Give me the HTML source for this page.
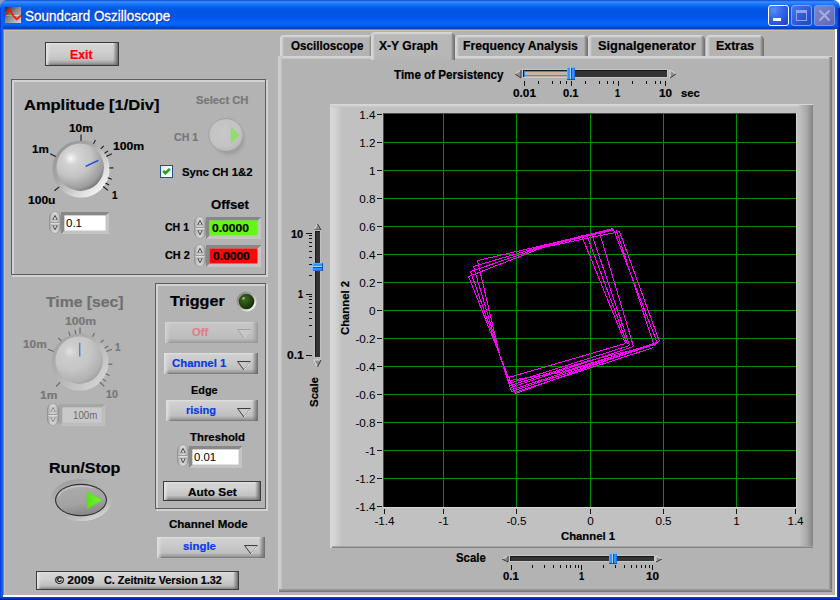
<!DOCTYPE html><html><head><meta charset="utf-8"><title>Soundcard Oszilloscope</title><style>
*{box-sizing:border-box;margin:0;padding:0}
html,body{width:840px;height:600px;overflow:hidden;background:#b3b3b3}
body{font-family:"Liberation Sans",sans-serif;position:relative;color:#000}
.a{position:absolute}
.t{position:absolute;white-space:nowrap;font-weight:bold;line-height:1;transform-origin:0 0;-webkit-text-stroke:0.2px currentColor}
.n{-webkit-text-stroke:0}
.n{font-weight:normal}
.g{color:#8a8a8a}
.bl{color:#0033cc}
</style></head><body>
<div class="a" style="left:0;top:0;width:420px;height:8px;background:#8a98c4"></div><div class="a" style="left:420px;top:0;width:420px;height:8px;background:#fff"></div>
<div class="a" id="titlebar" style="left:0;top:0;width:840px;height:29px;border-radius:7px 7px 0 0;background:linear-gradient(180deg,#0a3cc8 0,#2a78f0 1px,#3a8cff 2px,#2a84ff 3px,#1272fb 5px,#0560ee 7px,#0456e4 9px,#0353e2 13px,#0356e8 17px,#045cf2 20px,#0666fc 23px,#0560f6 25px,#0448d4 27px,#033cc0 29px)"></div>
<div class="a" style="left:0;top:8px;width:3px;height:592px;background:linear-gradient(90deg,#0030c8 0,#0c50e8 1px,#1264f4 2px,#0c58ea 3px)"></div>
<div class="a" style="left:837px;top:8px;width:3px;height:592px;background:linear-gradient(270deg,#001488 0,#0426b4 1px,#0a3cd4 2px,#0c44dc 3px)"></div>
<div class="a" style="left:0;top:597px;width:840px;height:3px;background:linear-gradient(0deg,#001488 0,#0426b4 1px,#0a3cd4 2px,#0c44dc 3px)"></div>
<div class="a" style="left:3px;top:29px;width:834px;height:1px;background:#8a846e"></div>
<div class="a" style="left:4px;top:30px;width:832px;height:1px;background:#c6bea6"></div>
<div class="a" style="left:3px;top:29px;width:1px;height:568px;background:#8a846e"></div>
<div class="a" style="left:4px;top:30px;width:1px;height:566px;background:#c6bea6"></div>
<div class="a" style="left:835px;top:29px;width:2px;height:568px;background:#fffff2"></div>
<div class="a" style="left:3px;top:595px;width:834px;height:2px;background:#fffff2"></div>
<svg class="a" style="left:5px;top:7px" width="16" height="16" viewBox="0 0 16 16"><defs><linearGradient id="icg" x1="0" y1="0" x2="1" y2="1"><stop offset="0" stop-color="#2a2422"/><stop offset=".45" stop-color="#8a8684"/><stop offset="1" stop-color="#d8d4d2"/></linearGradient></defs><rect width="16" height="16" fill="url(#icg)"/><path d="M0.5 8.5H8" stroke="#30f030" stroke-width="1"/><path d="M8 8.5H15" stroke="#a0f8a0" stroke-width="1"/><path d="M0.2 8.4L4.8 2.6L8.2 8.6L11.8 12.4L15.9 8.4" stroke="#ff1010" stroke-width="1.7" fill="none" stroke-linejoin="round"/></svg>
<div class="t n" style="left:25.3px;top:9px;font-size:14px;transform:scaleX(0.962);color:#fff;text-shadow:1px 1px 0 #0a2a9a;-webkit-text-stroke:0.3px #fff" id="title">Soundcard Oszilloscope</div>
<div class="a" style="left:768px;top:5px;width:21px;height:21px;border:1px solid #fff;border-radius:3px;background:radial-gradient(circle at 25% 20%,#5a8cf4 0,#3468ea 40%,#2450d8 75%,#1a3cb8 100%)"><div class="a" style="left:4px;top:12px;width:8px;height:3px;background:#fff"></div></div>
<div class="a" style="left:791px;top:5px;width:21px;height:21px;border:1px solid #86a2ea;border-radius:3px;background:linear-gradient(135deg,#4a78ec,#2c56d4 60%,#2248c4)"><div class="a" style="left:4px;top:4px;width:11px;height:11px;border:1px solid #8ea6e8;border-top-width:3px"></div></div>
<div class="a" style="left:814px;top:5px;width:21px;height:21px;border:1px solid #8494d2;border-radius:3px;background:linear-gradient(135deg,#7c88d0,#6a74c0 60%,#6068b4)"><svg class="a" style="left:3px;top:3px" width="13" height="13"><path d="M1.5 1.5L11.5 11.5M11.5 1.5L1.5 11.5" stroke="#a8aee0" stroke-width="2"/></svg></div>
<div class="a" style="left:45px;top:42px;width:74px;height:24px;background:#3a3a3a"></div>
<div class="a" style="left:46px;top:43px;width:72px;height:22px;background:linear-gradient(180deg,#e4e4e4 0,#d4d4d4 2px,#d0d0d0 40%,#c2c2c2 75%,#a0a0a0 calc(100% - 2px),#7c7c7c 100%)"></div>
<div class="a" style="left:46px;top:43px;width:4px;height:22px;background:linear-gradient(90deg,#e6e6e6,rgba(210,210,210,0))"></div>
<div class="a" style="left:113px;top:43px;width:5px;height:22px;background:linear-gradient(90deg,rgba(150,150,150,0),#6a6a6a)"></div>
<div class="t " id="exit" style="left:70.00px;top:49px;font-size:12.8px;transform:scaleX(0.9585);color:#ff0000;">Exit</div>
<div class="a" style="left:12px;top:80px;width:256px;height:197px;border:2px solid #d2d2d2"></div>
<div class="a" style="left:11px;top:79px;width:255px;height:196px;border:1px solid #5c5c5c"></div>
<div class="t " id="amp" style="left:23.75px;top:97px;font-size:15.3px;transform:scaleX(1.0770);">Amplitude [1/Div]</div>
<svg class="a" style="left:36px;top:124px" width="90" height="90" viewBox="-45 -45 90 90"><defs><linearGradient id="kr1" x1="0.15" y1="0.15" x2="0.85" y2="0.85"><stop offset="0" stop-color="#989898"/><stop offset=".35" stop-color="#a8a8a8"/><stop offset=".7" stop-color="#d2d2d2"/><stop offset="1" stop-color="#f2f2f2"/></linearGradient><radialGradient id="kb1" cx="0.36" cy="0.32" r="0.78" fx="0.33" fy="0.30"><stop offset="0" stop-color="#e0e0e0"/><stop offset=".2" stop-color="#d2d2d2"/><stop offset=".5" stop-color="#c4c4c4"/><stop offset=".82" stop-color="#9c9c9c"/><stop offset="1" stop-color="#5e5e5e"/></radialGradient><radialGradient id="ks1" cx=".5" cy=".5" r=".5"><stop offset="0" stop-color="#fff" stop-opacity="0.85"/><stop offset=".5" stop-color="#fff" stop-opacity="0.30"/><stop offset="1" stop-color="#fff" stop-opacity="0"/></radialGradient><radialGradient id="ko1" cx=".5" cy=".5" r=".5"><stop offset=".88" stop-color="#989898" stop-opacity="1"/><stop offset="1" stop-color="#b3b3b3" stop-opacity="0"/></radialGradient></defs><circle cx="0" cy="0" r="28.6" fill="url(#kr1)"/><circle cx="-0.8" cy="-1.8" r="23.7" fill="url(#kb1)"/><circle cx="-10.5" cy="-10.5" r="7" fill="url(#ks1)"/><path d="M-21.82 17.86L-26.62 21.79" stroke="#1a1a1a" stroke-width="1.1"/><path d="M-25.26 -12.54L-30.81 -15.30" stroke="#1a1a1a" stroke-width="1.1"/><path d="M0.00 -28.20L0.00 -34.40" stroke="#1a1a1a" stroke-width="1.1"/><path d="M25.28 -12.49L30.84 -15.24" stroke="#1a1a1a" stroke-width="1.1"/><path d="M22.10 17.52L26.96 21.37" stroke="#1a1a1a" stroke-width="1.1"/><path d="M12.54 -25.26L14.41 -29.02" stroke="#1a1a1a" stroke-width="1.1"/><path d="M19.80 -20.08L22.75 -23.07" stroke="#1a1a1a" stroke-width="1.1"/><path d="M23.46 -15.65L26.96 -17.98" stroke="#1a1a1a" stroke-width="1.1"/><path d="M28.18 -0.98L32.38 -1.13" stroke="#1a1a1a" stroke-width="1.1"/><path d="M26.77 8.85L30.76 10.17" stroke="#1a1a1a" stroke-width="1.1"/><path d="M24.47 14.01L28.12 16.10" stroke="#1a1a1a" stroke-width="1.1"/><path d="M4.66 -2.57L17.30 -8.59" stroke="#1848e0" stroke-width="1.5"/></svg>
<div class="t " id="k10m" style="left:68.75px;top:122px;font-size:11.6px;transform:scaleX(1.0232);">10m</div>
<div class="t " id="k1m" style="left:32.00px;top:143px;font-size:11.6px;transform:scaleX(0.9993);">1m</div>
<div class="t " id="k100m" style="left:112.50px;top:140px;font-size:11.6px;transform:scaleX(1.0532);">100m</div>
<div class="t " id="k100u" style="left:27.50px;top:194px;font-size:11.6px;transform:scaleX(1.0402);">100u</div>
<div class="t " id="k1" style="left:112.00px;top:189px;font-size:11.6px;transform:scaleX(0.8528);">1</div>
<svg class="a" style="left:48px;top:209.5px" width="14" height="25" viewBox="-1 -1 14 25"><defs><linearGradient id="sp49210.5" x1="0" x2="1" y1="0" y2="0"><stop offset="0" stop-color="#9c9c9c"/><stop offset=".3" stop-color="#cdcdcd"/><stop offset=".55" stop-color="#d6d6d6"/><stop offset=".8" stop-color="#bdbdbd"/><stop offset="1" stop-color="#8c8c8c"/></linearGradient></defs><rect x="0" y="0" width="12" height="23" rx="6" ry="7" fill="url(#sp49210.5)"/><rect x="0.5" y="0.5" width="11" height="22" rx="5.5" ry="6.5" fill="none" stroke="#8e8e8e" stroke-opacity=".7"/><path d="M1.5 11.5H10.5" stroke="#9a9a9a"/><path d="M1.5 12.5H10.5" stroke="#dcdcdc"/><path d="M3.8 8.8L6 4.4L8.2 8.8M3.8 14.4L6 18.8L8.2 14.4" stroke="#4a4a4a" stroke-width="1" fill="none"/><path d="M3.8 8.8H8.2M3.8 14.4H8.2" stroke="#4a4a4a" stroke-opacity=".45"/></svg>
<svg class="a" style="left:60.5px;top:211.5px" width="48.5" height="22"><rect width="48.5" height="22" fill="#c4c4c4"/><path d="M0 0H48.5L44.5 3.5H3.5V18.5L0 22Z" fill="#888888"/><rect x="3.5" y="3.5" width="41" height="15" fill="#fff"/></svg>
<div class="t " id="v01" style="left:65.70px;top:218px;font-size:10.9px;transform:scaleX(1.0560);font-weight:normal;-webkit-text-stroke:0;">0.1</div>
<div class="t " id="selch" style="left:196.30px;top:94px;font-size:11.6px;transform:scaleX(0.9696);color:#777777;">Select CH</div>
<div class="t " id="ch1g" style="left:174.20px;top:131px;font-size:11.6px;transform:scaleX(0.9120);color:#777777;">CH 1</div>
<svg class="a" style="left:200.2px;top:108.6px" width="52" height="52" viewBox="-26 -26 52 52"><defs><radialGradient id="tg1" cx=".45" cy=".42" r=".62"><stop offset="0" stop-color="#c7c7c7"/><stop offset=".7" stop-color="#c3c3c3"/><stop offset=".92" stop-color="#b8b8b8"/><stop offset="1" stop-color="#acacac"/></radialGradient><radialGradient id="tg2" cx=".5" cy=".5" r=".5"><stop offset="0" stop-color="#888" stop-opacity=".8"/><stop offset=".7" stop-color="#949494" stop-opacity=".6"/><stop offset="1" stop-color="#b3b3b3" stop-opacity="0"/></radialGradient></defs><circle cx="0" cy="0" r="20" fill="url(#tg2)" opacity=".35"/><circle cx="3" cy="4.5" r="19.5" fill="url(#tg2)"/><ellipse cx="0" cy="0" rx="17.4" ry="16.6" fill="url(#tg1)"/><ellipse cx="0" cy="0" rx="17.2" ry="16.4" fill="none" stroke="#989898" stroke-width=".9" stroke-opacity=".85"/><path d="M5.3 -7.6L13.2 0.3L5.3 8Z" fill="#92dc70" stroke="#92dc70" stroke-width="1" stroke-linejoin="round"/></svg>
<div class="a" style="left:160px;top:165px;width:13px;height:13px;background:linear-gradient(135deg,#e4e4e0,#fdfdfb 60%,#fff);border:1px solid #1c5088"></div>
<svg class="a" style="left:162px;top:167px" width="9" height="9"><path d="M1.2 3.8L3.5 6.2L7.8 1.8" stroke="#1fa01f" stroke-width="2.6" fill="none"/></svg>
<div class="t " id="sync" style="left:182.00px;top:166px;font-size:11.6px;transform:scaleX(0.9763);">Sync CH 1&amp;2</div>
<div class="t " id="offset" style="left:211.40px;top:198px;font-size:13.1px;transform:scaleX(1.0014);">Offset</div>
<div class="t " id="och1" style="left:165.30px;top:221px;font-size:11.6px;transform:scaleX(0.9082);">CH 1</div>
<svg class="a" style="left:193px;top:215px" width="14" height="25" viewBox="-1 -1 14 25"><defs><linearGradient id="sp194216" x1="0" x2="1" y1="0" y2="0"><stop offset="0" stop-color="#9c9c9c"/><stop offset=".3" stop-color="#cdcdcd"/><stop offset=".55" stop-color="#d6d6d6"/><stop offset=".8" stop-color="#bdbdbd"/><stop offset="1" stop-color="#8c8c8c"/></linearGradient></defs><rect x="0" y="0" width="12" height="23" rx="6" ry="7" fill="url(#sp194216)"/><rect x="0.5" y="0.5" width="11" height="22" rx="5.5" ry="6.5" fill="none" stroke="#8e8e8e" stroke-opacity=".7"/><path d="M1.5 11.5H10.5" stroke="#9a9a9a"/><path d="M1.5 12.5H10.5" stroke="#dcdcdc"/><path d="M3.8 8.8L6 4.4L8.2 8.8M3.8 14.4L6 18.8L8.2 14.4" stroke="#4a4a4a" stroke-width="1" fill="none"/><path d="M3.8 8.8H8.2M3.8 14.4H8.2" stroke="#4a4a4a" stroke-opacity=".45"/></svg>
<svg class="a" style="left:205.5px;top:216.5px" width="55.5" height="22"><rect width="55.5" height="22" fill="#c4c4c4"/><path d="M0 0H55.5L51.5 3.5H3.5V18.5L0 22Z" fill="#888888"/><rect x="3.5" y="3.5" width="48" height="15" fill="#62f813"/></svg>
<div class="t " id="g0" style="left:211.70px;top:223px;font-size:11.0px;transform:scaleX(1.0966);">0.0000</div>
<div class="t " id="och2" style="left:165.30px;top:249px;font-size:11.6px;transform:scaleX(0.9347);">CH 2</div>
<svg class="a" style="left:193px;top:243px" width="14" height="25" viewBox="-1 -1 14 25"><defs><linearGradient id="sp194244" x1="0" x2="1" y1="0" y2="0"><stop offset="0" stop-color="#9c9c9c"/><stop offset=".3" stop-color="#cdcdcd"/><stop offset=".55" stop-color="#d6d6d6"/><stop offset=".8" stop-color="#bdbdbd"/><stop offset="1" stop-color="#8c8c8c"/></linearGradient></defs><rect x="0" y="0" width="12" height="23" rx="6" ry="7" fill="url(#sp194244)"/><rect x="0.5" y="0.5" width="11" height="22" rx="5.5" ry="6.5" fill="none" stroke="#8e8e8e" stroke-opacity=".7"/><path d="M1.5 11.5H10.5" stroke="#9a9a9a"/><path d="M1.5 12.5H10.5" stroke="#dcdcdc"/><path d="M3.8 8.8L6 4.4L8.2 8.8M3.8 14.4L6 18.8L8.2 14.4" stroke="#4a4a4a" stroke-width="1" fill="none"/><path d="M3.8 8.8H8.2M3.8 14.4H8.2" stroke="#4a4a4a" stroke-opacity=".45"/></svg>
<svg class="a" style="left:205.5px;top:244.5px" width="55.5" height="22"><rect width="55.5" height="22" fill="#c4c4c4"/><path d="M0 0H55.5L51.5 3.5H3.5V18.5L0 22Z" fill="#888888"/><rect x="3.5" y="3.5" width="48" height="15" fill="#fb0707"/></svg>
<div class="t " id="r0" style="left:212.90px;top:251px;font-size:11.0px;transform:scaleX(1.0936);">0.0000</div>
<div class="t " id="time" style="left:45.75px;top:294px;font-size:15.3px;transform:scaleX(1.0279);color:#6f6f6f;">Time [sec]</div>
<svg class="a" style="left:35.400000000000006px;top:317px" width="90" height="90" viewBox="-45 -45 90 90"><defs><linearGradient id="kr2" x1="0.15" y1="0.15" x2="0.85" y2="0.85"><stop offset="0" stop-color="#a6a6a6"/><stop offset=".35" stop-color="#b0b0b0"/><stop offset=".7" stop-color="#c2c2c2"/><stop offset="1" stop-color="#d2d2d2"/></linearGradient><radialGradient id="kb2" cx="0.36" cy="0.32" r="0.78" fx="0.33" fy="0.30"><stop offset="0" stop-color="#d4d4d4"/><stop offset=".2" stop-color="#cccccc"/><stop offset=".5" stop-color="#c6c6c6"/><stop offset=".82" stop-color="#b2b2b2"/><stop offset="1" stop-color="#989898"/></radialGradient><radialGradient id="ks2" cx=".5" cy=".5" r=".5"><stop offset="0" stop-color="#fff" stop-opacity="0.35"/><stop offset=".5" stop-color="#fff" stop-opacity="0.12"/><stop offset="1" stop-color="#fff" stop-opacity="0"/></radialGradient><radialGradient id="ko2" cx=".5" cy=".5" r=".5"><stop offset=".88" stop-color="#a6a6a6" stop-opacity="1"/><stop offset="1" stop-color="#b3b3b3" stop-opacity="0"/></radialGradient></defs><circle cx="0" cy="0" r="28.6" fill="url(#kr2)"/><circle cx="-0.8" cy="-1.8" r="23.7" fill="url(#kb2)"/><circle cx="-10.5" cy="-10.5" r="7" fill="url(#ks2)"/><path d="M-19.70 20.18L-24.03 24.62" stroke="#686868" stroke-width="1.1"/><path d="M-26.18 -10.47L-31.94 -12.78" stroke="#686868" stroke-width="1.1"/><path d="M0.00 -28.20L0.00 -34.40" stroke="#686868" stroke-width="1.1"/><path d="M26.18 -10.47L31.94 -12.78" stroke="#686868" stroke-width="1.1"/><path d="M19.87 20.01L24.24 24.41" stroke="#686868" stroke-width="1.1"/><path d="M-18.80 -21.02L-21.60 -24.15" stroke="#686868" stroke-width="1.1"/><path d="M-9.83 -26.43L-11.29 -30.37" stroke="#686868" stroke-width="1.1"/><path d="M-4.31 -27.87L-4.96 -32.02" stroke="#686868" stroke-width="1.1"/><path d="M12.58 -25.24L14.46 -29.00" stroke="#686868" stroke-width="1.1"/><path d="M20.56 -19.30L23.62 -22.18" stroke="#686868" stroke-width="1.1"/><path d="M24.57 -13.84L28.23 -15.91" stroke="#686868" stroke-width="1.1"/><path d="M28.12 2.07L32.31 2.37" stroke="#686868" stroke-width="1.1"/><path d="M25.64 11.74L29.46 13.49" stroke="#686868" stroke-width="1.1"/><path d="M22.61 16.85L25.98 19.36" stroke="#686868" stroke-width="1.1"/><path d="M-0.30 -5.50L-0.30 -19.20" stroke="#5c7fd6" stroke-width="1.5"/></svg>
<div class="t " id="t100m" style="left:64.50px;top:315px;font-size:11.6px;transform:scaleX(1.0532);color:#777777;">100m</div>
<div class="t " id="t10m" style="left:23.00px;top:338px;font-size:11.6px;transform:scaleX(1.0232);color:#777777;">10m</div>
<div class="t " id="t1" style="left:114.50px;top:341px;font-size:11.6px;transform:scaleX(0.8528);color:#777777;">1</div>
<div class="t " id="t1m" style="left:39.50px;top:389px;font-size:11.6px;transform:scaleX(1.0291);color:#777777;">1m</div>
<div class="t " id="t10" style="left:106.25px;top:388px;font-size:11.6px;transform:scaleX(0.9303);color:#777777;">10</div>
<svg class="a" style="left:46px;top:402px" width="14" height="25" viewBox="-1 -1 14 25"><defs><linearGradient id="sp47403" x1="0" x2="1" y1="0" y2="0"><stop offset="0" stop-color="#9c9c9c"/><stop offset=".3" stop-color="#cdcdcd"/><stop offset=".55" stop-color="#d6d6d6"/><stop offset=".8" stop-color="#bdbdbd"/><stop offset="1" stop-color="#8c8c8c"/></linearGradient></defs><rect x="0" y="0" width="12" height="23" rx="6" ry="7" fill="url(#sp47403)"/><rect x="0.5" y="0.5" width="11" height="22" rx="5.5" ry="6.5" fill="none" stroke="#8e8e8e" stroke-opacity=".7"/><path d="M1.5 11.5H10.5" stroke="#9a9a9a"/><path d="M1.5 12.5H10.5" stroke="#dcdcdc"/><path d="M3.8 8.8L6 4.4L8.2 8.8M3.8 14.4L6 18.8L8.2 14.4" stroke="#8a8a8a" stroke-width="1" fill="none"/><path d="M3.8 8.8H8.2M3.8 14.4H8.2" stroke="#8a8a8a" stroke-opacity=".45"/></svg>
<svg class="a" style="left:58.5px;top:403.5px" width="46.5" height="22"><rect width="46.5" height="22" fill="#bebebe"/><path d="M0 0H46.5L42.5 3.5H3.5V18.5L0 22Z" fill="#a6a6a6"/><rect x="3.5" y="3.5" width="39" height="15" fill="#c9c9c9"/></svg>
<div class="t " id="v100m" style="left:73.10px;top:410px;font-size:10.9px;transform:scaleX(0.8877);font-weight:normal;-webkit-text-stroke:0;color:#6a6a6a;">100m</div>
<div class="t " id="run" style="left:48.60px;top:460px;font-size:15.3px;transform:scaleX(1.0503);">Run/Stop</div>
<svg class="a" style="left:43px;top:473px" width="76" height="54" viewBox="-38 -27 76 54"><defs><radialGradient id="rs0" cx=".5" cy=".5" r=".5"><stop offset=".72" stop-color="#8e8e8e" stop-opacity=".0"/><stop offset=".8" stop-color="#909090" stop-opacity=".55"/><stop offset="1" stop-color="#b3b3b3" stop-opacity="0"/></radialGradient><linearGradient id="rs1" x1="0.2" y1="0" x2="0.8" y2="1"><stop offset="0" stop-color="#8a8a8a" stop-opacity=".7"/><stop offset=".45" stop-color="#b3b3b3" stop-opacity="0"/><stop offset=".6" stop-color="#b3b3b3" stop-opacity="0"/><stop offset="1" stop-color="#ececec" stop-opacity=".95"/></linearGradient><linearGradient id="rs2" x1="0" y1="0" x2="0.3" y2="1"><stop offset="0" stop-color="#c4c4c4"/><stop offset=".25" stop-color="#a9a9a9"/><stop offset=".7" stop-color="#a2a2a2"/><stop offset="1" stop-color="#8c8c8c"/></linearGradient><linearGradient id="rs3" x1="0" x2="1"><stop offset="0" stop-color="#58e414"/><stop offset="1" stop-color="#7cf040"/></linearGradient></defs><ellipse cx="0" cy="0" rx="30.5" ry="21" fill="url(#rs1)"/><ellipse cx="0" cy="0" rx="26" ry="16.2" fill="#303030"/><ellipse cx="0" cy="0" rx="24.9" ry="15.1" fill="url(#rs2)"/><ellipse cx="0" cy="-0.3" rx="23.4" ry="13.6" fill="none" stroke="#d8d8d8" stroke-width="1.2" stroke-opacity=".55" stroke-dasharray="38 200" stroke-dashoffset="-62"/><path d="M6.2 -8.3L21.3 0.2L6.2 8.6Z" fill="url(#rs3)" stroke="#5ae01a" stroke-width=".8" stroke-linejoin="round"/></svg>
<div class="a" style="left:156px;top:284px;width:112px;height:227px;border:2px solid #d2d2d2"></div>
<div class="a" style="left:155px;top:283px;width:111px;height:226px;border:1px solid #5c5c5c"></div>
<div class="t " id="trig" style="left:170.00px;top:293px;font-size:15.3px;transform:scaleX(1.0546);">Trigger</div>
<svg class="a" style="left:234px;top:289px" width="25" height="25" viewBox="-12.5 -12.5 25 25"><defs><linearGradient id="ld1" x1=".15" y1=".15" x2=".85" y2=".85"><stop offset="0" stop-color="#8a8a8a"/><stop offset=".5" stop-color="#b0b0b0"/><stop offset="1" stop-color="#f4f4f4"/></linearGradient><radialGradient id="ld2" cx=".38" cy=".35" r=".7"><stop offset="0" stop-color="#3e6a2a"/><stop offset=".45" stop-color="#2a5014"/><stop offset="1" stop-color="#122806"/></radialGradient></defs><circle r="10" fill="url(#ld1)"/><circle r="7.8" fill="url(#ld2)"/><ellipse cx="-3" cy="-3.2" rx="1.6" ry="1.1" transform="rotate(-35 -3 -3.2)" fill="#c8dcb8" fill-opacity=".7"/></svg>
<div class="a" style="left:165px;top:322px;width:93px;height:21px;background:linear-gradient(180deg,#d2d2d2 0,#c6c6c6 2px,#c2c2c2 45%,#bcbcbc 78%,#aaaaaa calc(100% - 2px),#989898 100%)"></div>
<div class="a" style="left:165px;top:322px;width:5px;height:21px;background:linear-gradient(90deg,#d4d4d4,rgba(214,214,214,0))"></div>
<div class="a" style="left:252px;top:322px;width:6px;height:21px;background:linear-gradient(90deg,rgba(150,150,150,0),#9a9a9a)"></div>
<svg class="a" style="left:237px;top:329px" width="14" height="10"><path d="M0.5 0.5H13.5L7 9Z" fill="#c8c8c8" stroke="#a2a2a2" stroke-width="1"/><path d="M13.5 0.8L7.3 9" stroke="#d8d8d8" stroke-width="1" fill="none"/></svg>
<div class="t " id="off" style="left:192.00px;top:326px;font-size:11.6px;transform:scaleX(0.9718);color:#e47c8c;">Off</div>
<div class="a" style="left:164px;top:353px;width:94px;height:21px;background:linear-gradient(180deg,#e2e2e2 0,#d0d0d0 2px,#cacaca 40%,#bfbfbf 75%,#a0a0a0 calc(100% - 2px),#767676 100%)"></div>
<div class="a" style="left:164px;top:353px;width:5px;height:21px;background:linear-gradient(90deg,#e0e0e0,rgba(214,214,214,0))"></div>
<div class="a" style="left:252px;top:353px;width:6px;height:21px;background:linear-gradient(90deg,rgba(150,150,150,0),#6c6c6c)"></div>
<svg class="a" style="left:237px;top:361px" width="14" height="10"><path d="M0.5 0.5H13.5L7 9Z" fill="#c8c8c8" stroke="#3c3c3c" stroke-width="1"/><path d="M13.5 0.8L7.3 9" stroke="#ececec" stroke-width="1" fill="none"/></svg>
<div class="t " id="chan1" style="left:172.00px;top:357px;font-size:11.6px;transform:scaleX(0.9795);color:#0c38e8;">Channel 1</div>
<div class="t " id="edge" style="left:191.20px;top:384px;font-size:11.6px;transform:scaleX(0.9379);">Edge</div>
<div class="a" style="left:166px;top:400px;width:92px;height:21px;background:linear-gradient(180deg,#e2e2e2 0,#d0d0d0 2px,#cacaca 40%,#bfbfbf 75%,#a0a0a0 calc(100% - 2px),#767676 100%)"></div>
<div class="a" style="left:166px;top:400px;width:5px;height:21px;background:linear-gradient(90deg,#e0e0e0,rgba(214,214,214,0))"></div>
<div class="a" style="left:252px;top:400px;width:6px;height:21px;background:linear-gradient(90deg,rgba(150,150,150,0),#6c6c6c)"></div>
<svg class="a" style="left:237px;top:408px" width="14" height="10"><path d="M0.5 0.5H13.5L7 9Z" fill="#c8c8c8" stroke="#3c3c3c" stroke-width="1"/><path d="M13.5 0.8L7.3 9" stroke="#ececec" stroke-width="1" fill="none"/></svg>
<div class="t " id="rising" style="left:185.80px;top:404px;font-size:11.6px;transform:scaleX(0.9498);color:#0c38e8;">rising</div>
<div class="t " id="thr" style="left:189.70px;top:431px;font-size:11.6px;transform:scaleX(0.9808);">Threshold</div>
<svg class="a" style="left:176px;top:443px" width="14" height="25" viewBox="-1 -1 14 25"><defs><linearGradient id="sp177444" x1="0" x2="1" y1="0" y2="0"><stop offset="0" stop-color="#9c9c9c"/><stop offset=".3" stop-color="#cdcdcd"/><stop offset=".55" stop-color="#d6d6d6"/><stop offset=".8" stop-color="#bdbdbd"/><stop offset="1" stop-color="#8c8c8c"/></linearGradient></defs><rect x="0" y="0" width="12" height="23" rx="6" ry="7" fill="url(#sp177444)"/><rect x="0.5" y="0.5" width="11" height="22" rx="5.5" ry="6.5" fill="none" stroke="#8e8e8e" stroke-opacity=".7"/><path d="M1.5 11.5H10.5" stroke="#9a9a9a"/><path d="M1.5 12.5H10.5" stroke="#dcdcdc"/><path d="M3.8 8.8L6 4.4L8.2 8.8M3.8 14.4L6 18.8L8.2 14.4" stroke="#4a4a4a" stroke-width="1" fill="none"/><path d="M3.8 8.8H8.2M3.8 14.4H8.2" stroke="#4a4a4a" stroke-opacity=".45"/></svg>
<svg class="a" style="left:188.5px;top:445.5px" width="53.5" height="22"><rect width="53.5" height="22" fill="#c4c4c4"/><path d="M0 0H53.5L49.5 3.5H3.5V18.5L0 22Z" fill="#888888"/><rect x="3.5" y="3.5" width="46" height="15" fill="#fff"/></svg>
<div class="t " id="v001" style="left:193.70px;top:452px;font-size:10.9px;transform:scaleX(1.0419);font-weight:normal;-webkit-text-stroke:0;">0.01</div>
<div class="a" style="left:163px;top:481px;width:98px;height:20px;background:#3a3a3a"></div>
<div class="a" style="left:164px;top:482px;width:96px;height:18px;background:linear-gradient(180deg,#e4e4e4 0,#d4d4d4 2px,#d0d0d0 40%,#c2c2c2 75%,#a0a0a0 calc(100% - 2px),#7c7c7c 100%)"></div>
<div class="a" style="left:164px;top:482px;width:4px;height:18px;background:linear-gradient(90deg,#e6e6e6,rgba(210,210,210,0))"></div>
<div class="a" style="left:255px;top:482px;width:5px;height:18px;background:linear-gradient(90deg,rgba(150,150,150,0),#6a6a6a)"></div>
<div class="t " id="autoset" style="left:187.50px;top:486px;font-size:11.6px;transform:scaleX(1.0212);">Auto Set</div>
<div class="t " id="chmode" style="left:169.20px;top:518px;font-size:11.6px;transform:scaleX(0.9940);">Channel Mode</div>
<div class="a" style="left:157px;top:537px;width:108px;height:21px;background:linear-gradient(180deg,#e2e2e2 0,#d0d0d0 2px,#cacaca 40%,#bfbfbf 75%,#a0a0a0 calc(100% - 2px),#767676 100%)"></div>
<div class="a" style="left:157px;top:537px;width:5px;height:21px;background:linear-gradient(90deg,#e0e0e0,rgba(214,214,214,0))"></div>
<div class="a" style="left:259px;top:537px;width:6px;height:21px;background:linear-gradient(90deg,rgba(150,150,150,0),#6c6c6c)"></div>
<svg class="a" style="left:244px;top:545px" width="14" height="10"><path d="M0.5 0.5H13.5L7 9Z" fill="#c8c8c8" stroke="#3c3c3c" stroke-width="1"/><path d="M13.5 0.8L7.3 9" stroke="#ececec" stroke-width="1" fill="none"/></svg>
<div class="t " id="single" style="left:183.30px;top:540px;font-size:11.6px;transform:scaleX(0.9814);color:#0c38e8;">single</div>
<div class="a" style="left:36px;top:571px;width:203px;height:19px;background:#3c3c3c"></div>
<div class="a" style="left:37px;top:572px;width:201px;height:17px;background:linear-gradient(180deg,#e2e2e2 0,#d4d4d4 2px,#cfcfcf 45%,#bebebe 80%,#9a9a9a calc(100% - 1px),#808080 100%)"></div>
<div class="a" style="left:37px;top:572px;width:4px;height:17px;background:linear-gradient(90deg,#e8e8e8,rgba(210,210,210,0))"></div>
<div class="a" style="left:233px;top:572px;width:5px;height:17px;background:linear-gradient(90deg,rgba(150,150,150,0),#6c6c6c)"></div>
<div class="t " id="ver" style="left:55.10px;top:575px;font-size:10.9px;transform:scaleX(1.1103);">© 2009</div>
<div class="t " id="ver2" style="left:104.30px;top:575px;font-size:10.9px;transform:scaleX(0.9931);">C. Zeitnitz Version 1.32</div>
<div class="a" style="left:278px;top:56px;width:554px;height:536px;background:#b3b3b3"></div>
<div class="a" style="left:278px;top:56px;width:554px;height:3px;background:linear-gradient(180deg,#d6d6d6,#cdcdcd 66%,#c0c0c0)"></div>
<div class="a" style="left:278px;top:56px;width:4px;height:536px;background:linear-gradient(90deg,#d0d0d0,#cbcbcb 60%,#bebebe)"></div>
<div class="a" style="left:829px;top:57px;width:3px;height:535px;background:linear-gradient(90deg,#a2a2a2,#8a8a8a 50%,#707070)"></div>
<div class="a" style="left:279px;top:589px;width:553px;height:3px;background:linear-gradient(180deg,#a2a2a2,#8a8a8a 50%,#707070)"></div>
<div class="a" style="left:280px;top:35px;width:93px;height:21px;background:#b3b3b3;border-radius:4px 5px 0 0;overflow:hidden"><div class="a" style="left:0;top:0;width:100%;height:3px;background:linear-gradient(180deg,#dcdcdc,#cecece 60%,rgba(190,190,190,0))"></div><div class="a" style="left:0;top:0;width:4px;height:100%;background:linear-gradient(90deg,#dadada,#d0d0d0 50%,rgba(190,190,190,0))"></div><div class="a" style="right:0;top:1px;width:4px;height:100%;background:linear-gradient(90deg,rgba(160,160,160,0),#8e8e8e 40%,#6c6c6c)"></div></div>
<div class="a" style="left:455px;top:35px;width:133px;height:21px;background:#b3b3b3;border-radius:4px 5px 0 0;overflow:hidden"><div class="a" style="left:0;top:0;width:100%;height:3px;background:linear-gradient(180deg,#dcdcdc,#cecece 60%,rgba(190,190,190,0))"></div><div class="a" style="left:0;top:0;width:4px;height:100%;background:linear-gradient(90deg,#dadada,#d0d0d0 50%,rgba(190,190,190,0))"></div><div class="a" style="right:0;top:1px;width:4px;height:100%;background:linear-gradient(90deg,rgba(160,160,160,0),#8e8e8e 40%,#6c6c6c)"></div></div>
<div class="a" style="left:588px;top:35px;width:117px;height:21px;background:#b3b3b3;border-radius:4px 5px 0 0;overflow:hidden"><div class="a" style="left:0;top:0;width:100%;height:3px;background:linear-gradient(180deg,#dcdcdc,#cecece 60%,rgba(190,190,190,0))"></div><div class="a" style="left:0;top:0;width:4px;height:100%;background:linear-gradient(90deg,#dadada,#d0d0d0 50%,rgba(190,190,190,0))"></div><div class="a" style="right:0;top:1px;width:4px;height:100%;background:linear-gradient(90deg,rgba(160,160,160,0),#8e8e8e 40%,#6c6c6c)"></div></div>
<div class="a" style="left:706px;top:35px;width:58px;height:21px;background:#b3b3b3;border-radius:4px 5px 0 0;overflow:hidden"><div class="a" style="left:0;top:0;width:100%;height:3px;background:linear-gradient(180deg,#dcdcdc,#cecece 60%,rgba(190,190,190,0))"></div><div class="a" style="left:0;top:0;width:4px;height:100%;background:linear-gradient(90deg,#dadada,#d0d0d0 50%,rgba(190,190,190,0))"></div><div class="a" style="right:0;top:1px;width:4px;height:100%;background:linear-gradient(90deg,rgba(160,160,160,0),#8e8e8e 40%,#6c6c6c)"></div></div>
<div class="a" style="left:371px;top:32px;width:84px;height:28px;background:#b7b7b7;border-radius:4px 5px 0 0;overflow:hidden"><div class="a" style="left:0;top:0;width:100%;height:3px;background:linear-gradient(180deg,#dcdcdc,#cecece 60%,rgba(190,190,190,0))"></div><div class="a" style="left:0;top:0;width:4px;height:100%;background:linear-gradient(90deg,#dadada,#d0d0d0 50%,rgba(190,190,190,0))"></div><div class="a" style="right:0;top:1px;width:4px;height:100%;background:linear-gradient(90deg,rgba(160,160,160,0),#8e8e8e 40%,#6c6c6c)"></div></div>
<div class="a" style="left:375px;top:55px;width:76px;height:6px;background:linear-gradient(180deg,#b7b7b7,#b3b3b3)"></div>
<div class="t " id="tb1" style="left:290.50px;top:40px;font-size:12.7px;transform:scaleX(0.9171);">Oscilloscope</div>
<div class="t " id="tb2" style="left:379.25px;top:40px;font-size:12.7px;transform:scaleX(0.9535);">X-Y Graph</div>
<div class="t " id="tb3" style="left:463.00px;top:40px;font-size:12.7px;transform:scaleX(0.9622);">Frequency Analysis</div>
<div class="t " id="tb4" style="left:598.00px;top:40px;font-size:12.7px;transform:scaleX(1.0110);">Signalgenerator</div>
<div class="t " id="tb5" style="left:716.25px;top:40px;font-size:12.7px;transform:scaleX(0.9785);">Extras</div>
<div class="t " id="top" style="left:393.75px;top:69px;font-size:12.0px;transform:scaleX(0.9677);">Time of Persistency</div>
<svg class="a" style="left:514px;top:69px" width="8" height="10" viewBox="-1 -1 8 10"><path d="M6 0L0 4.0L6 8Z" fill="#909090"/><path d="M6 0L0 4.0" stroke="#dcdcdc" stroke-width="1" fill="none"/><path d="M0 4.0L6 8L6 0" stroke="#3a3a3a" stroke-width="1" fill="none"/></svg>
<svg class="a" style="left:669px;top:69px" width="8" height="10" viewBox="-1 -1 8 10"><path d="M0 0L6 4.0L0 8Z" fill="#909090"/><path d="M0 8L0 0L6 4.0" stroke="#dcdcdc" stroke-width="1" fill="none"/><path d="M6 4.0L0 8" stroke="#3a3a3a" stroke-width="1" fill="none"/></svg>
<div class="a" style="left:522px;top:69px;width:146px;height:9px;background:#c6c6c6"></div>
<div class="a" style="left:523px;top:70px;width:144px;height:7px;background:#343434;border-top:1px solid #161616;border-left:1px solid #161616"></div>
<div class="a" style="left:524px;top:71px;width:44px;height:6px;background:#c6b6a6;border:1px solid #2e90ff;border-bottom:none;box-shadow:inset 0 -1px 0 #c0b0a0,inset 0 -2px 0 #2e90ff"></div>
<div class="a" style="left:567px;top:67px;width:8px;height:13px;background:linear-gradient(90deg,#5aaaff 0,#5aaaff 12.5%,#3292ff 12.5%,#3292ff 37.5%,#a4d2ff 37.5%,#a4d2ff 50%,#1050b4 50%,#1050b4 62.5%,#3292ff 62.5%,#3292ff 87.5%,#2272d8 87.5%,#2272d8 100%);box-shadow:inset 0 1px 0 rgba(150,200,255,.7),inset 0 -1px 0 rgba(10,60,150,.7)"></div>
<svg class="a" style="left:0;top:81px" width="840" height="8" shape-rendering="crispEdges"><rect x="524" y="0" width="1" height="5" fill="#101010"/><rect x="538" y="0" width="1" height="3" fill="#101010"/><rect x="552" y="0" width="1" height="3" fill="#101010"/><rect x="560" y="0" width="1" height="3" fill="#101010"/><rect x="566" y="0" width="1" height="3" fill="#101010"/><rect x="571" y="0" width="1" height="5" fill="#101010"/><rect x="585" y="0" width="1" height="3" fill="#101010"/><rect x="599" y="0" width="1" height="3" fill="#101010"/><rect x="607" y="0" width="1" height="3" fill="#101010"/><rect x="613" y="0" width="1" height="3" fill="#101010"/><rect x="618" y="0" width="1" height="5" fill="#101010"/><rect x="632" y="0" width="1" height="3" fill="#101010"/><rect x="646" y="0" width="1" height="3" fill="#101010"/><rect x="655" y="0" width="1" height="3" fill="#101010"/><rect x="660" y="0" width="1" height="3" fill="#101010"/><rect x="665" y="0" width="1" height="5" fill="#101010"/></svg>
<div class="t " id="s001" style="left:512.50px;top:87px;font-size:11.6px;transform:scaleX(1.0189);">0.01</div>
<div class="t " id="s01" style="left:562.50px;top:87px;font-size:11.6px;transform:scaleX(0.9613);">0.1</div>
<div class="t " id="s1" style="left:615.00px;top:87px;font-size:11.6px;transform:scaleX(0.7752);">1</div>
<div class="t " id="s10" style="left:658.75px;top:87px;font-size:11.6px;transform:scaleX(1.0078);">10</div>
<div class="t " id="ssec" style="left:680.50px;top:87px;font-size:11.6px;transform:scaleX(0.9691);">sec</div>
<div class="t " id="scl" style="left:456.10px;top:552px;font-size:12.0px;transform:scaleX(0.9472);">Scale</div>
<svg class="a" style="left:501px;top:555px" width="8" height="8" viewBox="-1 -1 8 8"><path d="M6 0L0 3.0L6 6Z" fill="#909090"/><path d="M6 0L0 3.0" stroke="#dcdcdc" stroke-width="1" fill="none"/><path d="M0 3.0L6 6L6 0" stroke="#3a3a3a" stroke-width="1" fill="none"/></svg>
<svg class="a" style="left:655px;top:555px" width="8" height="8" viewBox="-1 -1 8 8"><path d="M0 0L6 3.0L0 6Z" fill="#909090"/><path d="M0 6L0 0L6 3.0" stroke="#dcdcdc" stroke-width="1" fill="none"/><path d="M6 3.0L0 6" stroke="#3a3a3a" stroke-width="1" fill="none"/></svg>
<div class="a" style="left:509px;top:555px;width:146px;height:7px;background:#c6c6c6"></div>
<div class="a" style="left:510px;top:556px;width:144px;height:5px;background:#343434;border-top:1px solid #161616;border-left:1px solid #161616"></div>
<div class="a" style="left:609px;top:553px;width:8px;height:11px;background:linear-gradient(90deg,#5aaaff 0,#5aaaff 12.5%,#3292ff 12.5%,#3292ff 37.5%,#a4d2ff 37.5%,#a4d2ff 50%,#1050b4 50%,#1050b4 62.5%,#3292ff 62.5%,#3292ff 87.5%,#2272d8 87.5%,#2272d8 100%);box-shadow:inset 0 1px 0 rgba(150,200,255,.7),inset 0 -1px 0 rgba(10,60,150,.7)"></div>
<svg class="a" style="left:0;top:565px" width="840" height="8" shape-rendering="crispEdges"><rect x="511" y="0" width="1" height="5" fill="#101010"/><rect x="532" y="0" width="1" height="3" fill="#101010"/><rect x="544" y="0" width="1" height="3" fill="#101010"/><rect x="553" y="0" width="1" height="3" fill="#101010"/><rect x="560" y="0" width="1" height="3" fill="#101010"/><rect x="566" y="0" width="1" height="3" fill="#101010"/><rect x="570" y="0" width="1" height="3" fill="#101010"/><rect x="575" y="0" width="1" height="3" fill="#101010"/><rect x="578" y="0" width="1" height="3" fill="#101010"/><rect x="581" y="0" width="1" height="5" fill="#101010"/><rect x="603" y="0" width="1" height="3" fill="#101010"/><rect x="615" y="0" width="1" height="3" fill="#101010"/><rect x="624" y="0" width="1" height="3" fill="#101010"/><rect x="631" y="0" width="1" height="3" fill="#101010"/><rect x="636" y="0" width="1" height="3" fill="#101010"/><rect x="641" y="0" width="1" height="3" fill="#101010"/><rect x="645" y="0" width="1" height="3" fill="#101010"/><rect x="649" y="0" width="1" height="3" fill="#101010"/><rect x="652" y="0" width="1" height="5" fill="#101010"/></svg>
<div class="t " id="b01" style="left:502.60px;top:570px;font-size:11.6px;transform:scaleX(0.9799);">0.1</div>
<div class="t " id="b1" style="left:579.00px;top:570px;font-size:11.6px;transform:scaleX(0.8063);">1</div>
<div class="t " id="b10" style="left:645.70px;top:570px;font-size:11.6px;transform:scaleX(1.0156);">10</div>
<svg class="a" style="left:313px;top:223px" width="9" height="8" viewBox="-1 -1 9 8"><path d="M0 6L3.5 0L7 6Z" fill="#909090"/><path d="M0 6L3.5 0" stroke="#dcdcdc" stroke-width="1" fill="none"/><path d="M3.5 0L7 6L0 6" stroke="#3a3a3a" stroke-width="1" fill="none"/></svg>
<svg class="a" style="left:313px;top:359px" width="9" height="9" viewBox="-1 -1 9 9"><path d="M0 0L3.5 7L7 0Z" fill="#909090"/><path d="M7 0L0 0L3.5 7" stroke="#dcdcdc" stroke-width="1" fill="none"/><path d="M3.5 7L7 0" stroke="#3a3a3a" stroke-width="1" fill="none"/></svg>
<div class="a" style="left:314px;top:230px;width:7px;height:128px;background:#bebebe"></div>
<div class="a" style="left:315px;top:231px;width:5px;height:126px;background:#343434;border-top:1px solid #161616;border-left:1px solid #161616"></div>
<div class="a" style="left:312px;top:263px;width:11px;height:8px;background:linear-gradient(180deg,#5aaaff 0,#5aaaff 12.5%,#3292ff 12.5%,#3292ff 37.5%,#a4d2ff 37.5%,#a4d2ff 50%,#1050b4 50%,#1050b4 62.5%,#3292ff 62.5%,#3292ff 87.5%,#2272d8 87.5%,#2272d8 100%);box-shadow:inset 1px 0 0 rgba(150,200,255,.7),inset -1px 0 0 rgba(10,60,150,.7)"></div>
<svg class="a" style="left:300px;top:0" width="14" height="600" shape-rendering="crispEdges"><rect x="6" y="233" width="6" height="1" fill="#161616"/><rect x="9" y="275" width="3" height="1" fill="#161616"/><rect x="9" y="264" width="3" height="1" fill="#161616"/><rect x="9" y="257" width="3" height="1" fill="#161616"/><rect x="9" y="251" width="3" height="1" fill="#161616"/><rect x="9" y="246" width="3" height="1" fill="#161616"/><rect x="9" y="242" width="3" height="1" fill="#161616"/><rect x="9" y="238" width="3" height="1" fill="#161616"/><rect x="9" y="235" width="3" height="1" fill="#161616"/><rect x="6" y="294" width="6" height="1" fill="#161616"/><rect x="9" y="336" width="3" height="1" fill="#161616"/><rect x="9" y="325" width="3" height="1" fill="#161616"/><rect x="9" y="318" width="3" height="1" fill="#161616"/><rect x="9" y="312" width="3" height="1" fill="#161616"/><rect x="9" y="307" width="3" height="1" fill="#161616"/><rect x="9" y="303" width="3" height="1" fill="#161616"/><rect x="9" y="299" width="3" height="1" fill="#161616"/><rect x="9" y="296" width="3" height="1" fill="#161616"/><rect x="6" y="355" width="6" height="1" fill="#161616"/></svg>
<div class="t " id="v10" style="left:290.80px;top:228px;font-size:11.6px;transform:scaleX(0.9458);">10</div>
<div class="t " id="v1" style="left:297.50px;top:288px;font-size:11.6px;transform:scaleX(0.7752);">1</div>
<div class="t " id="vp1" style="left:287.30px;top:349px;font-size:11.6px;transform:scaleX(1.0357);">0.1</div>
<div class="a" style="left:330px;top:104px;width:483px;height:444px;background:#c1c1c1"></div>
<div class="a" style="left:330px;top:104px;width:12px;height:444px;background:linear-gradient(90deg,#d8d8d8,#d4d4d4 40%,#c1c1c1)"></div>
<div class="a" style="left:330px;top:104px;width:483px;height:3px;background:linear-gradient(180deg,#dadada,#d0d0d0 66%,#c4c4c4)"></div>
<div class="a" style="left:799px;top:105px;width:14px;height:443px;background:linear-gradient(90deg,#c1c1c1,#a8a8a8 55%,#848484)"></div>
<div class="a" style="left:332px;top:546px;width:481px;height:2px;background:linear-gradient(180deg,#a4a4a4 0,#a4a4a4 50%,#848484 50%,#848484 100%)"></div>
<div class="a" style="left:383px;top:113px;width:414px;height:395px;background:#d6d6d6"></div>
<div class="a" style="left:383px;top:113px;width:413px;height:394px;background:#484848"></div>
<div class="a" style="left:384px;top:114px;width:412px;height:393px;background:#000"></div>
<svg class="a" style="left:0;top:0" width="840" height="600" shape-rendering="crispEdges"><rect x="443" y="114" width="1" height="393" fill="#009000"/><rect x="516" y="114" width="1" height="393" fill="#009000"/><rect x="590" y="114" width="1" height="393" fill="#009000"/><rect x="663" y="114" width="1" height="393" fill="#009000"/><rect x="736" y="114" width="1" height="393" fill="#009000"/><rect x="384" y="478" width="412" height="1" fill="#009000"/><rect x="384" y="450" width="412" height="1" fill="#009000"/><rect x="384" y="422" width="412" height="1" fill="#009000"/><rect x="384" y="394" width="412" height="1" fill="#009000"/><rect x="384" y="366" width="412" height="1" fill="#009000"/><rect x="384" y="338" width="412" height="1" fill="#009000"/><rect x="384" y="310" width="412" height="1" fill="#009000"/><rect x="384" y="282" width="412" height="1" fill="#009000"/><rect x="384" y="254" width="412" height="1" fill="#009000"/><rect x="384" y="226" width="412" height="1" fill="#009000"/><rect x="384" y="198" width="412" height="1" fill="#009000"/><rect x="384" y="170" width="412" height="1" fill="#009000"/><rect x="384" y="142" width="412" height="1" fill="#009000"/><rect x="377" y="506" width="5" height="1" fill="#161616"/><rect x="377" y="478" width="5" height="1" fill="#161616"/><rect x="377" y="450" width="5" height="1" fill="#161616"/><rect x="377" y="422" width="5" height="1" fill="#161616"/><rect x="377" y="394" width="5" height="1" fill="#161616"/><rect x="377" y="366" width="5" height="1" fill="#161616"/><rect x="377" y="338" width="5" height="1" fill="#161616"/><rect x="377" y="310" width="5" height="1" fill="#161616"/><rect x="377" y="282" width="5" height="1" fill="#161616"/><rect x="377" y="254" width="5" height="1" fill="#161616"/><rect x="377" y="226" width="5" height="1" fill="#161616"/><rect x="377" y="198" width="5" height="1" fill="#161616"/><rect x="377" y="170" width="5" height="1" fill="#161616"/><rect x="377" y="142" width="5" height="1" fill="#161616"/><rect x="377" y="114" width="5" height="1" fill="#161616"/><rect x="384" y="509" width="1" height="5" fill="#161616"/><rect x="443" y="509" width="1" height="5" fill="#161616"/><rect x="516" y="509" width="1" height="5" fill="#161616"/><rect x="590" y="509" width="1" height="5" fill="#161616"/><rect x="663" y="509" width="1" height="5" fill="#161616"/><rect x="736" y="509" width="1" height="5" fill="#161616"/><rect x="795" y="509" width="1" height="5" fill="#161616"/><path d="M477.5 260.5L542.5 245.5L613.5 228.5" stroke="#ff00ff" stroke-width="1" fill="none"/><path d="M477.5 260.5L500.5 358.5L515.5 393.5" stroke="#ff00ff" stroke-width="1" fill="none"/><path d="M473.5 266.5L542.5 246.2L613.5 229.2" stroke="#ff00ff" stroke-width="1" fill="none"/><path d="M473.5 266.5L501.1 359.5L511.5 391.5" stroke="#ff00ff" stroke-width="1" fill="none"/><path d="M470.5 271.5L542.5 246.9L613.5 229.9" stroke="#ff00ff" stroke-width="1" fill="none"/><path d="M470.5 271.5L501.7 360.5L509.5 383.5" stroke="#ff00ff" stroke-width="1" fill="none"/><path d="M468.5 276.5L542.5 247.6L619.5 231.6" stroke="#ff00ff" stroke-width="1" fill="none"/><path d="M468.5 276.5L502.3 361.5L508.5 377.5" stroke="#ff00ff" stroke-width="1" fill="none"/><path d="M581.5 235.5L625.5 343.5" stroke="#ff00ff" stroke-width="1" fill="none"/><path d="M586.5 234.5L627.5 344.5" stroke="#ff00ff" stroke-width="1" fill="none"/><path d="M591.5 233.5L629.5 345.5" stroke="#ff00ff" stroke-width="1" fill="none"/><path d="M599.5 232.5L633.5 346.5" stroke="#ff00ff" stroke-width="1" fill="none"/><path d="M613.5 229.5L657.5 343.5" stroke="#ff00ff" stroke-width="1" fill="none"/><path d="M619.5 231.5L659.5 341.5" stroke="#ff00ff" stroke-width="1" fill="none"/><path d="M616.5 230.5L654.5 346.5" stroke="#ff00ff" stroke-width="1" fill="none"/><path d="M659.5 341.5L515.5 393.5" stroke="#ff00ff" stroke-width="1" fill="none"/><path d="M657.5 343.5L511.5 391.5" stroke="#ff00ff" stroke-width="1" fill="none"/><path d="M653.5 347.5L514.5 392.5" stroke="#ff00ff" stroke-width="1" fill="none"/><path d="M633.5 346.5L510.5 387.5" stroke="#ff00ff" stroke-width="1" fill="none"/><path d="M629.5 345.5L509.5 383.5" stroke="#ff00ff" stroke-width="1" fill="none"/><path d="M625.5 343.5L508.5 377.5" stroke="#ff00ff" stroke-width="1" fill="none"/><path d="M656.5 342.5L512.5 389.5" stroke="#ff00ff" stroke-width="1" fill="none"/><path d="M658.5 342.5L560.5 372.5L509.5 380.5" stroke="#ff00ff" stroke-width="1" fill="none"/><path d="M655.5 344.5L585.5 361.5L510.5 385.5" stroke="#ff00ff" stroke-width="1" fill="none"/></svg>
<div class="t n" style="right:464.4px;top:501px;font-size:11.7px">-1.4</div>
<div class="t n" style="right:464.4px;top:473px;font-size:11.7px">-1.2</div>
<div class="t n" style="right:464.4px;top:445px;font-size:11.7px">-1</div>
<div class="t n" style="right:464.4px;top:417px;font-size:11.7px">-0.8</div>
<div class="t n" style="right:464.4px;top:389px;font-size:11.7px">-0.6</div>
<div class="t n" style="right:464.4px;top:361px;font-size:11.7px">-0.4</div>
<div class="t n" style="right:464.4px;top:333px;font-size:11.7px">-0.2</div>
<div class="t n" style="right:464.4px;top:305px;font-size:11.7px">0</div>
<div class="t n" style="right:464.4px;top:277px;font-size:11.7px">0.2</div>
<div class="t n" style="right:464.4px;top:249px;font-size:11.7px">0.4</div>
<div class="t n" style="right:464.4px;top:221px;font-size:11.7px">0.6</div>
<div class="t n" style="right:464.4px;top:193px;font-size:11.7px">0.8</div>
<div class="t n" style="right:464.4px;top:165px;font-size:11.7px">1</div>
<div class="t n" style="right:464.4px;top:137px;font-size:11.7px">1.2</div>
<div class="t n" style="right:464.4px;top:109px;font-size:11.7px">1.4</div>
<div class="t n" style="left:354.5px;width:60px;text-align:center;top:515px;font-size:11.7px">-1.4</div>
<div class="t n" style="left:413.5px;width:60px;text-align:center;top:515px;font-size:11.7px">-1</div>
<div class="t n" style="left:486.5px;width:60px;text-align:center;top:515px;font-size:11.7px">-0.5</div>
<div class="t n" style="left:560.5px;width:60px;text-align:center;top:515px;font-size:11.7px">0</div>
<div class="t n" style="left:633.5px;width:60px;text-align:center;top:515px;font-size:11.7px">0.5</div>
<div class="t n" style="left:706.5px;width:60px;text-align:center;top:515px;font-size:11.7px">1</div>
<div class="t n" style="left:765.5px;width:60px;text-align:center;top:515px;font-size:11.7px">1.4</div>
<div class="t " id="c1" style="left:561.40px;top:530px;font-size:11.6px;transform:scaleX(0.9759);">Channel 1</div>
<div class="t" id="c2" style="left:338.80px;top:335.00px;font-size:11.6px;transform:rotate(-90deg) scaleX(0.9741)">Channel 2</div>
<div class="t" id="vscale" style="left:308.30px;top:406.70px;font-size:11.6px;transform:rotate(-90deg) scaleX(0.9897)">Scale</div>
</body></html>
